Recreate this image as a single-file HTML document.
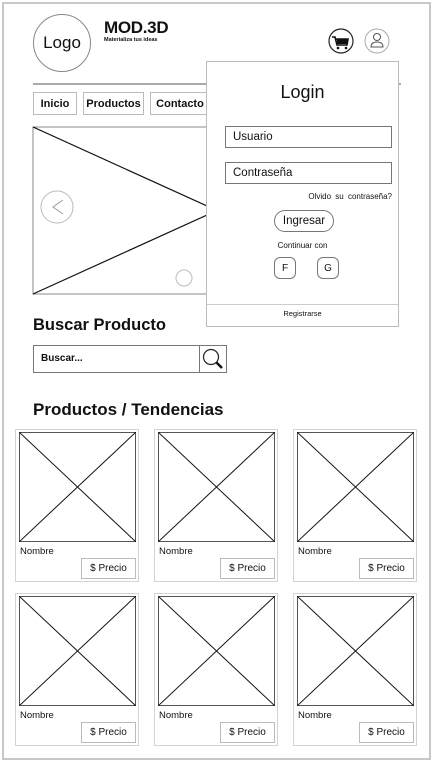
<!DOCTYPE html>
<html><head><meta charset="utf-8"><style>
*{margin:0;padding:0;box-sizing:border-box}
body{width:435px;height:763px;background:#fff;font-family:"Liberation Sans",sans-serif;color:#111;position:relative;overflow:hidden}
.a{position:absolute}
.btn{position:absolute;border:1px solid #bbb;background:#fff;font-weight:bold;font-size:11px;display:flex;align-items:center;justify-content:center}
.card{position:absolute;border:1px solid #d4d4d4;width:124px;height:153px}
.card .nm{position:absolute;left:4px;top:116px;font-size:9.5px}
.card .pr{position:absolute;left:65px;top:128px;width:55px;height:21px;border:1px solid #bbb;font-size:10px;display:flex;align-items:center;justify-content:center}
.card svg{position:absolute;left:3px;top:2px}
</style></head><body>
<div class="a" style="left:2px;top:2px;width:429px;height:758px;border:2px solid #c8c8c8"></div>
<div class="a" style="left:33px;top:14px;width:58px;height:58px;border:1px solid #888;border-radius:50%;font-size:17px;display:flex;align-items:center;justify-content:center">Logo</div>
<div class="a" style="left:104px;top:18px;font-size:17px;font-weight:bold;letter-spacing:-0.3px">MOD.3D</div>
<div class="a" style="left:104px;top:37px;font-size:5.5px;font-weight:bold">Materializa tus ideas</div>
<svg class="a" style="left:328px;top:28px" width="64" height="27">
<circle cx="13" cy="13" r="12" fill="#fff" stroke="#222" stroke-width="1.2"/>
<path d="M4 9 L7 9 L9 17 L19 17 L20 11 L8 11" fill="none" stroke="#111" stroke-width="1.6"/>
<rect x="9" y="11" width="10" height="5" fill="#111"/>
<circle cx="10" cy="20" r="1.3" fill="#111"/><circle cx="18" cy="20" r="1.3" fill="#111"/>
<circle cx="49" cy="13" r="12" fill="#fff" stroke="#aaa"/>
<circle cx="49" cy="9" r="3.5" fill="none" stroke="#555"/>
<path d="M43 19 Q43 14 49 14 Q55 14 55 19 Z" fill="none" stroke="#555"/>
</svg>
<div class="a" style="left:33px;top:83px;width:368px;height:2px;background:#aaa"></div>
<div class="btn" style="left:33px;top:92px;width:44px;height:23px">Inicio</div>
<div class="btn" style="left:83px;top:92px;width:61px;height:23px">Productos</div>
<div class="btn" style="left:150px;top:92px;width:60px;height:23px">Contacto</div>
<svg class="a" style="left:32px;top:126px" width="366" height="170">
<rect x="1" y="1" width="364" height="167" fill="none" stroke="#888"/>
<line x1="1" y1="1" x2="369" y2="168" stroke="#111" stroke-width="1.2"/>
<line x1="1" y1="168" x2="369" y2="1" stroke="#111" stroke-width="1.2"/>
<circle cx="25" cy="81" r="16" fill="#fff" stroke="#bbb"/>
<path d="M31 74 L21 81 L31 88" fill="none" stroke="#999"/>
<circle cx="152" cy="152" r="8" fill="#fff" stroke="#bbb"/>
</svg>
<div class="a" style="left:206px;top:61px;width:193px;height:266px;border:1px solid #bbb;background:#fff">
<div class="a" style="left:0;width:191px;top:20px;text-align:center;font-size:18px">Login</div>
<div class="a" style="left:18px;top:64px;width:167px;height:22px;border:1px solid #777;font-size:11.5px;padding:4px 7px">Usuario</div>
<div class="a" style="left:18px;top:100px;width:167px;height:22px;border:1px solid #777;font-size:11.5px;padding:4px 7px">Contraseña</div>
<div class="a" style="right:6px;top:130px;font-size:8px;word-spacing:2px">Olvido su contraseña?</div>
<div class="a" style="left:67px;top:148px;width:60px;height:22px;border:1px solid #777;border-radius:11px;font-size:11.5px;display:flex;align-items:center;justify-content:center">Ingresar</div>
<div class="a" style="left:0;width:191px;top:179px;text-align:center;font-size:8px">Continuar con</div>
<div class="a" style="left:67px;top:195px;width:22px;height:22px;border:1px solid #777;border-radius:6px;font-size:10px;display:flex;align-items:center;justify-content:center">F</div>
<div class="a" style="left:110px;top:195px;width:22px;height:22px;border:1px solid #777;border-radius:6px;font-size:10px;display:flex;align-items:center;justify-content:center">G</div>
<div class="a" style="left:0;top:242px;width:191px;height:1px;background:#ccc"></div>
<div class="a" style="left:0;width:191px;top:247px;text-align:center;font-size:7.5px">Registrarse</div>
</div>
<div class="a" style="left:33px;top:316px;font-size:16.5px;font-weight:bold">Buscar Producto</div>
<div class="a" style="left:33px;top:345px;width:167px;height:28px;border:1px solid #777;font-size:10px;font-weight:bold;padding:7px 7px">Buscar...</div>
<svg class="a" style="left:199px;top:345px" width="28" height="28">
<rect x="0.5" y="0.5" width="27" height="27" fill="#fff" stroke="#777"/>
<circle cx="12" cy="12" r="7.5" fill="none" stroke="#222" stroke-width="1.2"/>
<line x1="17.5" y1="17.5" x2="23" y2="23" stroke="#111" stroke-width="2.5"/>
</svg>
<div class="a" style="left:33px;top:400px;font-size:17px;font-weight:bold">Productos / Tendencias</div>
<div class="card" style="left:15px;top:429px"><svg width="117" height="110"><rect x=".5" y=".5" width="116" height="109" fill="none" stroke="#555"/><path d="M0 0L117 110M117 0L0 110" stroke="#111"/></svg><div class="nm">Nombre</div><div class="pr">$ Precio</div></div>
<div class="card" style="left:154px;top:429px"><svg width="117" height="110"><rect x=".5" y=".5" width="116" height="109" fill="none" stroke="#555"/><path d="M0 0L117 110M117 0L0 110" stroke="#111"/></svg><div class="nm">Nombre</div><div class="pr">$ Precio</div></div>
<div class="card" style="left:293px;top:429px"><svg width="117" height="110"><rect x=".5" y=".5" width="116" height="109" fill="none" stroke="#555"/><path d="M0 0L117 110M117 0L0 110" stroke="#111"/></svg><div class="nm">Nombre</div><div class="pr">$ Precio</div></div>
<div class="card" style="left:15px;top:593px"><svg width="117" height="110"><rect x=".5" y=".5" width="116" height="109" fill="none" stroke="#555"/><path d="M0 0L117 110M117 0L0 110" stroke="#111"/></svg><div class="nm">Nombre</div><div class="pr">$ Precio</div></div>
<div class="card" style="left:154px;top:593px"><svg width="117" height="110"><rect x=".5" y=".5" width="116" height="109" fill="none" stroke="#555"/><path d="M0 0L117 110M117 0L0 110" stroke="#111"/></svg><div class="nm">Nombre</div><div class="pr">$ Precio</div></div>
<div class="card" style="left:293px;top:593px"><svg width="117" height="110"><rect x=".5" y=".5" width="116" height="109" fill="none" stroke="#555"/><path d="M0 0L117 110M117 0L0 110" stroke="#111"/></svg><div class="nm">Nombre</div><div class="pr">$ Precio</div></div>
</body></html>
